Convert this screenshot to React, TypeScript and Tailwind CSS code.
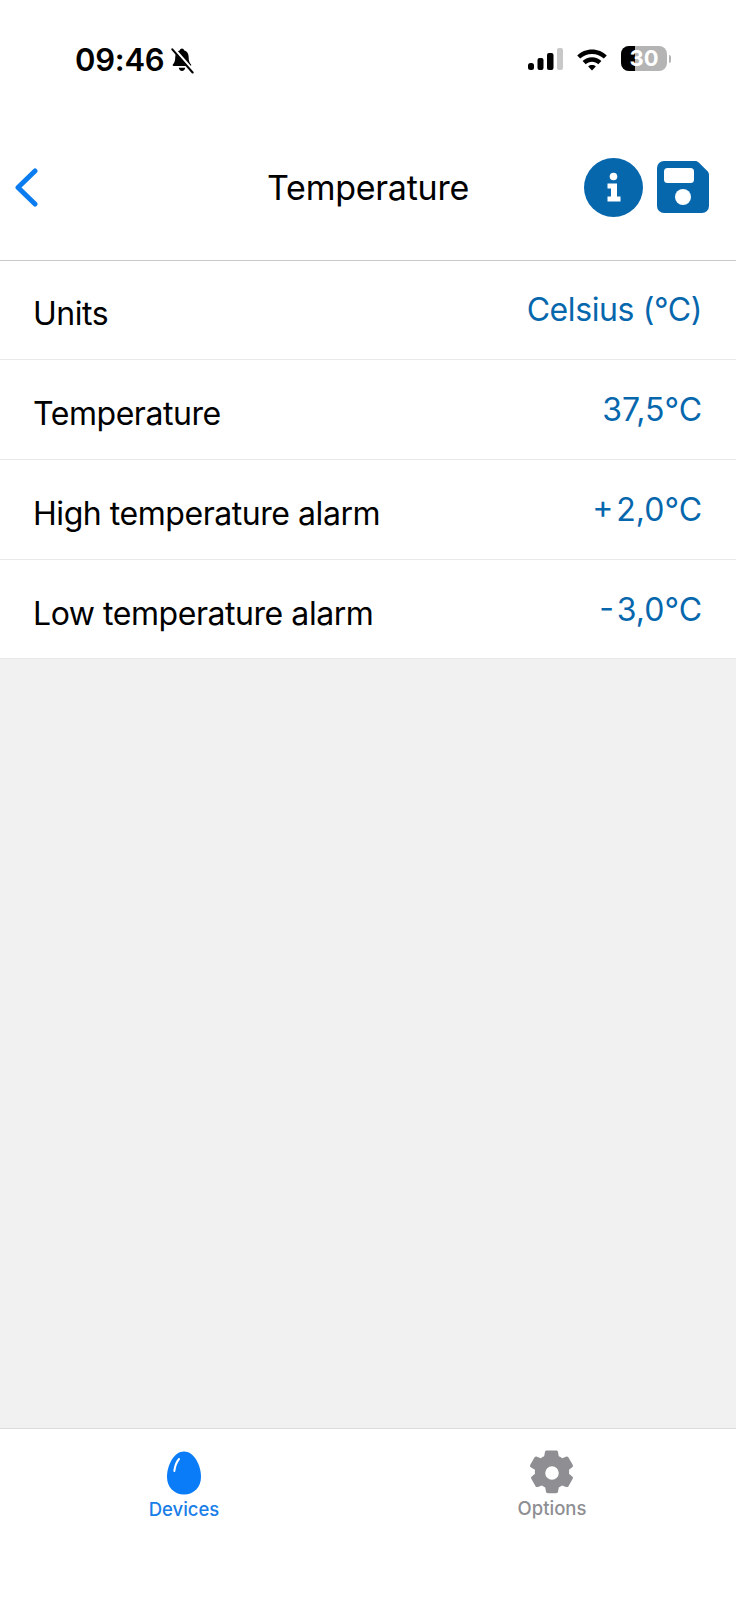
const rows = [
  { label: "Units", value: "Celsius (°C)", track: "tracking-[-0.4px]" },
  { label: "Temperature", value: "37,5°C", track: "tracking-[0px]" },
  { label: "High temperature alarm", value: "+\u200a2,0°C", track: "tracking-[0px]" },
  { label: "Low temperature alarm", value: "-\u200a3,0°C", track: "tracking-[0px]" },
];

function StatusBar() {
  return (
    <div className="h-[112px] shrink-0 flex items-start justify-between pt-[42px] pl-[75px] pr-[65px]">
      <div className="flex items-center gap-[6px]">
        <span className="text-[31px] leading-[36px] font-semibold text-black tracking-[-0.25px]">09:46</span>
        <svg width="24" height="28" viewBox="0 0 26 28">
          <path d="M13 1.5c1.2 0 2 .8 2.2 1.9 3.4 1 5 3.8 5 7.3 0 3.2.6 6 2.6 8.3.5.7.1 1.5-.8 1.5H3.9c-.9 0-1.3-.8-.8-1.5 2-2.300 2.600-5.100 2.600-8.300 0-3.500 1.600-6.300 5-7.300.3-1.100 1.100-1.900 2.300-1.900z" fill="#000" />
          <path d="M9.500 22.500h7c-.2 2-1.600 3.500-3.500 3.500s-3.300-1.500-3.500-3.500z" fill="#000" />
          <path d="M2.500 0.500l22 25" stroke="#fff" strokeWidth="4" />
          <path d="M2.500 2.500l22 25" stroke="#000" strokeWidth="2.200" strokeLinecap="round" />
        </svg>
      </div>
      <div className="flex items-center gap-[13px] pt-[4px]">
        <svg width="36" height="24" viewBox="0 0 36 24">
          <rect x="1" y="16" width="6" height="7" rx="2.500" fill="#000" />
          <rect x="10.500" y="11" width="6" height="12" rx="2" fill="#000" />
          <rect x="20" y="6" width="6.500" height="17" rx="2" fill="#000" />
          <rect x="30" y="1" width="6" height="22" rx="2" fill="#c8c8c8" />
        </svg>
        <svg width="32" height="24" viewBox="0 0 32 24">
          <path d="M16 2.500c5.800 0 11 2.300 14.800 6l-3 3.100C24.800 8.700 20.600 7 16 7S7.200 8.700 4.200 11.600l-3-3.100C5 4.800 10.200 2.500 16 2.500z" fill="#000" />
          <path d="M16 10.300c3.600 0 6.900 1.400 9.400 3.800l-3.100 3.100c-1.700-1.600-3.900-2.500-6.300-2.500s-4.600.9-6.300 2.500l-3.100-3.100c2.500-2.400 5.800-3.800 9.400-3.800z" fill="#000" />
          <path d="M16 18c1.500 0 2.800.5 3.800 1.400L16 23.500l-3.800-4.100c1-.9 2.300-1.400 3.800-1.400z" fill="#000" />
        </svg>
        <div className="flex items-center gap-[2px]">
          <div className="w-[46px] h-[25px] rounded-[8px] overflow-hidden bg-[#b4b4b4] flex items-center justify-center relative">
            <div className="absolute left-0 top-0 bottom-0 w-[14px] bg-black" />
            <span className="relative text-[22px] leading-[25px] font-bold text-white">30</span>
          </div>
          <div className="w-[2px] h-[8px] rounded-r-full bg-[#b4b4b4]" />
        </div>
      </div>
    </div>
  );
}

function Header() {
  return (
    <div className="h-[148px] shrink-0 flex items-center justify-between shadow-[0_1px_0_#c9c9cb] pt-[3px] pl-[14px] pr-[27px] relative z-10">
      <svg width="24" height="40" viewBox="0 0 24 40">
        <path d="M21 3L4 19.500 21 36" fill="none" stroke="#0a7cf0" strokeWidth="5" strokeLinecap="round" strokeLinejoin="round" />
      </svg>
      <span className="absolute left-0 right-0 text-center text-[34px] leading-[40px] text-black tracking-[-0.25px]">Temperature</span>
      <div className="flex items-center gap-[14px] relative">
        <svg width="59" height="59" viewBox="0 0 59 59">
          <circle cx="29.500" cy="29.500" r="29.500" fill="#0767ad" />
          <circle cx="29.500" cy="18.500" r="3.800" fill="#fff" />
          <path d="M23.500 25.500h9.500v13h3.500v5h-13v-5h3.500v-8h-3.500z" fill="#fff" />
        </svg>
        <svg width="52" height="52" viewBox="0 0 52 52" className="mb-[2px]">
          <path d="M7 0h31c1.500 0 3 .6 4 1.700l8.300 8.300c1.100 1 1.700 2.500 1.700 4v31a7 7 0 0 1-7 7H7a7 7 0 0 1-7-7V7a7 7 0 0 1 7-7z" fill="#0767ad" />
          <rect x="7" y="7" width="30" height="15" rx="3.500" fill="#fff" />
          <circle cx="26" cy="36" r="8" fill="#fff" />
        </svg>
      </div>
    </div>
  );
}

export default function App() {
  return (
    <div className="w-[736px] h-[1600px] flex flex-col bg-white font-['Inter','Liberation_Sans',sans-serif]">
      <StatusBar />
      <Header />
      <div className="shrink-0">
        {rows.map((row, i) => (
          <div
            key={row.label}
            className={`flex justify-between pl-[33px] pr-[34px] ${i < 3 ? "h-[100px] border-b border-[#e9e9eb]" : "h-[98px]"}`}
          >
            <span className="text-[32px] leading-[40px] text-black pt-[34px] h-fit box-content tracking-[-0.45px]">{row.label}</span>
            <span className={`text-[32px] leading-[40px] text-[#0767ad] pt-[30px] h-fit box-content ${row.track}`}>{row.value}</span>
          </div>
        ))}
      </div>
      <div className="flex-1 bg-[#f1f1f1] border-t border-[#e9e9eb]" />
      <div className="h-[172px] shrink-0 border-t border-[#dcdcde] flex">
        <div className="w-[368px] flex flex-col items-center pt-[22px]">
          <svg width="36" height="44" viewBox="0 0 36 44">
            <path d="M18 0.500C28 0.500 35 14 35 26c0 10-7 17.500-17 17.500S1 36 1 26C1 14 8 0.500 18 0.500z" fill="#0a7cf8" />
            <path d="M13 8c-2.500 3-4 7-4.700 12" stroke="#fff" strokeWidth="2" fill="none" strokeLinecap="round" />
          </svg>
          <span className="text-[18.5px] leading-[22px] font-medium text-[#1a7ee8] mt-[3px]">Devices</span>
        </div>
        <div className="w-[368px] flex flex-col items-center pt-[20px]">
          <svg width="48" height="48" viewBox="0 0 46 46">
            <path
              fillRule="evenodd"
              d="M19 1.500h8c1 0 1.700.6 1.800 1.500l.7 4c1.100.4 2.200 1 3.200 1.800l3.800-1.400c.9-.3 1.800 0 2.300.8l4 7c.5.8.300 1.700-.4 2.300l-3.100 2.500c.2 1.300.2 2.500 0 3.800l3.100 2.500c.7.6.9 1.500.4 2.300l-4 7c-.5.8-1.400 1.100-2.300.8l-3.800-1.400c-1 .8-2.100 1.400-3.200 1.800l-.7 4c-.1.900-.8 1.500-1.800 1.500h-8c-1 0-1.700-.6-1.800-1.500l-.7-4c-1.100-.4-2.200-1-3.200-1.800l-3.800 1.400c-.9.3-1.800 0-2.300-.8l-4-7c-.5-.8-.3-1.700.4-2.300l3.100-2.500c-.2-1.300-.2-2.500 0-3.800L2.600 17.500c-.7-.6-.9-1.500-.4-2.300l4-7c.5-.8 1.400-1.100 2.300-.8l3.800 1.400c1-.8 2.100-1.400 3.200-1.800l.7-4c.1-.9.800-1.500 1.800-1.500zM23 16.500a6.500 6.500 0 1 0 0 13 6.500 6.500 0 0 0 0-13z"
              fill="#8e8e93"
            />
          </svg>
          <span className="text-[18.5px] leading-[22px] font-medium text-[#8e8e93]">Options</span>
        </div>
      </div>
    </div>
  );
}
